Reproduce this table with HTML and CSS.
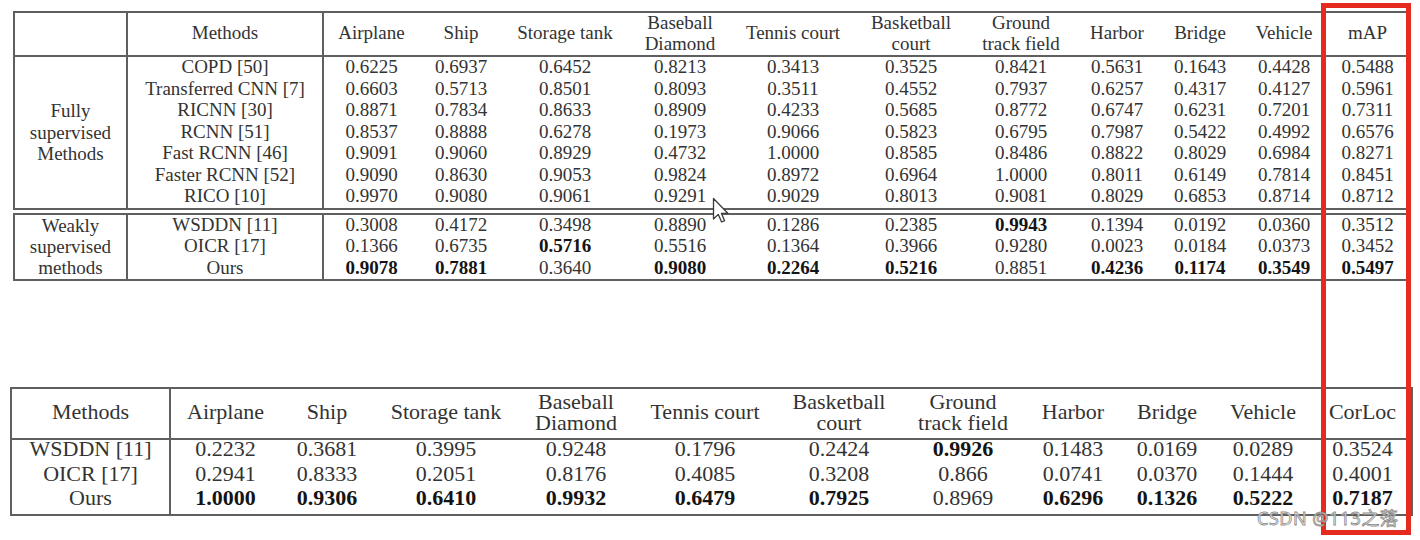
FILE: index.html
```html
<!DOCTYPE html>
<html>
<head>
<meta charset="utf-8">
<link rel="stylesheet" href="styles.css">
</head>
<body>
<div class="page">
  <table class="tbl t1">
    <colgroup>
      <col class="c1"><col class="c2"><col class="c3"><col class="c4"><col class="c5"><col class="c6"><col class="c7">
      <col class="c8"><col class="c9"><col class="c10"><col class="c11"><col class="c12"><col class="c13">
    </colgroup>
    <thead>
      <tr>
        <th class="g"></th><th class="m">Methods</th><th>Airplane</th><th>Ship</th><th>Storage tank</th>
        <th>Baseball<br>Diamond</th><th>Tennis court</th><th>Basketball<br>court</th><th>Ground<br>track field</th>
        <th>Harbor</th><th>Bridge</th><th>Vehicle</th><th>mAP</th>
      </tr>
    </thead>
    <tbody class="full">
      <tr><td class="g" rowspan="7">Fully<br>supervised<br>Methods</td><td class="m">COPD [50]</td><td>0.6225</td><td>0.6937</td><td>0.6452</td><td>0.8213</td><td>0.3413</td><td>0.3525</td><td>0.8421</td><td>0.5631</td><td>0.1643</td><td>0.4428</td><td>0.5488</td></tr>
      <tr><td class="m">Transferred CNN [7]</td><td>0.6603</td><td>0.5713</td><td>0.8501</td><td>0.8093</td><td>0.3511</td><td>0.4552</td><td>0.7937</td><td>0.6257</td><td>0.4317</td><td>0.4127</td><td>0.5961</td></tr>
      <tr><td class="m">RICNN [30]</td><td>0.8871</td><td>0.7834</td><td>0.8633</td><td>0.8909</td><td>0.4233</td><td>0.5685</td><td>0.8772</td><td>0.6747</td><td>0.6231</td><td>0.7201</td><td>0.7311</td></tr>
      <tr><td class="m">RCNN [51]</td><td>0.8537</td><td>0.8888</td><td>0.6278</td><td>0.1973</td><td>0.9066</td><td>0.5823</td><td>0.6795</td><td>0.7987</td><td>0.5422</td><td>0.4992</td><td>0.6576</td></tr>
      <tr><td class="m">Fast RCNN [46]</td><td>0.9091</td><td>0.9060</td><td>0.8929</td><td>0.4732</td><td>1.0000</td><td>0.8585</td><td>0.8486</td><td>0.8822</td><td>0.8029</td><td>0.6984</td><td>0.8271</td></tr>
      <tr><td class="m">Faster RCNN [52]</td><td>0.9090</td><td>0.8630</td><td>0.9053</td><td>0.9824</td><td>0.8972</td><td>0.6964</td><td>1.0000</td><td>0.8011</td><td>0.6149</td><td>0.7814</td><td>0.8451</td></tr>
      <tr><td class="m">RICO [10]</td><td>0.9970</td><td>0.9080</td><td>0.9061</td><td>0.9291</td><td>0.9029</td><td>0.8013</td><td>0.9081</td><td>0.8029</td><td>0.6853</td><td>0.8714</td><td>0.8712</td></tr>
    </tbody>
    <tbody class="weak">
      <tr class="first"><td class="g" rowspan="3">Weakly<br>supervised<br>methods</td><td class="m">WSDDN [11]</td><td>0.3008</td><td>0.4172</td><td>0.3498</td><td>0.8890</td><td>0.1286</td><td>0.2385</td><td class="b">0.9943</td><td>0.1394</td><td>0.0192</td><td>0.0360</td><td>0.3512</td></tr>
      <tr><td class="m">OICR [17]</td><td>0.1366</td><td>0.6735</td><td class="b">0.5716</td><td>0.5516</td><td>0.1364</td><td>0.3966</td><td>0.9280</td><td>0.0023</td><td>0.0184</td><td>0.0373</td><td>0.3452</td></tr>
      <tr><td class="m">Ours</td><td class="b">0.9078</td><td class="b">0.7881</td><td>0.3640</td><td class="b">0.9080</td><td class="b">0.2264</td><td class="b">0.5216</td><td>0.8851</td><td class="b">0.4236</td><td class="b">0.1174</td><td class="b">0.3549</td><td class="b">0.5497</td></tr>
    </tbody>
  </table>

  <table class="tbl t2">
    <colgroup>
      <col class="c1"><col class="c2"><col class="c3"><col class="c4"><col class="c5"><col class="c6">
      <col class="c7"><col class="c8"><col class="c9"><col class="c10"><col class="c11"><col class="c12">
    </colgroup>
    <thead>
      <tr>
        <th class="m">Methods</th><th>Airplane</th><th>Ship</th><th>Storage tank</th><th>Baseball<br>Diamond</th>
        <th>Tennis court</th><th>Basketball<br>court</th><th>Ground<br>track field</th><th>Harbor</th><th>Bridge</th>
        <th>Vehicle</th><th>CorLoc</th>
      </tr>
    </thead>
    <tbody>
      <tr><td class="m">WSDDN [11]</td><td>0.2232</td><td>0.3681</td><td>0.3995</td><td>0.9248</td><td>0.1796</td><td>0.2424</td><td class="b">0.9926</td><td>0.1483</td><td>0.0169</td><td>0.0289</td><td>0.3524</td></tr>
      <tr><td class="m">OICR [17]</td><td>0.2941</td><td>0.8333</td><td>0.2051</td><td>0.8176</td><td>0.4085</td><td>0.3208</td><td>0.866</td><td>0.0741</td><td>0.0370</td><td>0.1444</td><td>0.4001</td></tr>
      <tr><td class="m">Ours</td><td class="b">1.0000</td><td class="b">0.9306</td><td class="b">0.6410</td><td class="b">0.9932</td><td class="b">0.6479</td><td class="b">0.7925</td><td>0.8969</td><td class="b">0.6296</td><td class="b">0.1326</td><td class="b">0.5222</td><td class="b">0.7187</td></tr>
    </tbody>
  </table>

  <svg class="cursor" width="18" height="27" viewBox="0 0 18 27">
    <path d="M1.5 1.5 L1.5 22 L6.3 17.4 L9.6 25 L12.6 23.7 L9.4 16.3 L15.8 16.3 Z" fill="#fff" stroke="#3a3a3a" stroke-width="1.3" stroke-linejoin="round"/>
  </svg>

  <div class="redbox"></div>

  <div class="watermark">CSDN @113之落</div>
</div>
</body>
</html>
```

FILE: styles.css
```css
html, body {
  margin: 0;
  padding: 0;
  background: #ffffff;
}

.page {
  position: relative;
  width: 1420px;
  height: 540px;
  overflow: hidden;
  padding: 11px 0 0 10px;
  box-sizing: border-box;
  font-family: "Liberation Serif", "Times New Roman", serif;
  color: #333333;
}

.tbl {
  border-collapse: collapse;
  table-layout: fixed;
  border: 2px solid #5f5f5f;
}

.tbl th,
.tbl td {
  padding: 0;
  text-align: center;
  vertical-align: middle;
  white-space: nowrap;
  font-weight: normal;
}

.tbl thead tr {
  border-bottom: 2px solid #5f5f5f;
}

.tbl .g,
.tbl .m {
  border-right: 2px solid #5f5f5f;
}

.tbl .b {
  font-weight: bold;
  color: #141414;
}

/* top table */
.t1 {
  margin-left: 3px;
  width: 1393px;
  font-size: 19px;
}

.t1 .c1 { width: 113px; }
.t1 .c2 { width: 196px; }
.t1 .c3 { width: 96px; }
.t1 .c4 { width: 84px; }
.t1 .c5 { width: 124px; }
.t1 .c6 { width: 106px; }
.t1 .c7 { width: 120px; }
.t1 .c8 { width: 116px; }
.t1 .c9 { width: 104px; }
.t1 .c10 { width: 88px; }
.t1 .c11 { width: 78px; }
.t1 .c12 { width: 90px; }
.t1 .c13 { width: 78px; }

.t1 th {
  height: 41px;
  padding-bottom: 1px;
  line-height: 20.5px;
}

.t1 td {
  height: 19.5px;
  padding-bottom: 2px;
  line-height: 19.5px;
}

.t1 td.g {
  height: auto;
  padding: 0;
  line-height: 21.5px;
}

.t1 .weak td {
  height: 19px;
  padding-bottom: 2.5px;
  line-height: 19px;
}

.t1 .weak td.g {
  height: auto;
  padding: 0 0 1.5px 0;
  line-height: 21px;
}

.t1 .weak tr.first td {
  border-top: 7px double #5f5f5f;
}

/* bottom table */
.t2 {
  margin-top: 106px;
  width: 1401px;
  font-size: 22px;
}

.t2 .c1 { width: 159px; }
.t2 .c2 { width: 110px; }
.t2 .c3 { width: 94px; }
.t2 .c4 { width: 144px; }
.t2 .c5 { width: 116px; }
.t2 .c6 { width: 142px; }
.t2 .c7 { width: 126px; }
.t2 .c8 { width: 122px; }
.t2 .c9 { width: 98px; }
.t2 .c10 { width: 90px; }
.t2 .c11 { width: 102px; }
.t2 .c12 { width: 98px; }

.t2 th {
  height: 45px;
  padding-bottom: 4px;
  line-height: 21px;
}

.t2 td {
  height: 18px;
  padding-bottom: 6.5px;
  line-height: 18px;
}

/* overlays */
.cursor {
  position: absolute;
  left: 712px;
  top: 197px;
}

.redbox {
  position: absolute;
  left: 1321px;
  top: 3px;
  width: 80px;
  height: 522px;
  border: 5px solid #e52a1e;
  pointer-events: none;
}

.watermark {
  position: absolute;
  left: 1257px;
  top: 507px;
  font-family: "Noto Sans", "Noto Sans CJK SC", sans-serif;
  font-size: 18px;
  line-height: 22px;
  letter-spacing: 0.5px;
  color: rgba(255, 255, 255, 0.85);
  -webkit-text-stroke: 0.8px #8a8a8a;
}
```
